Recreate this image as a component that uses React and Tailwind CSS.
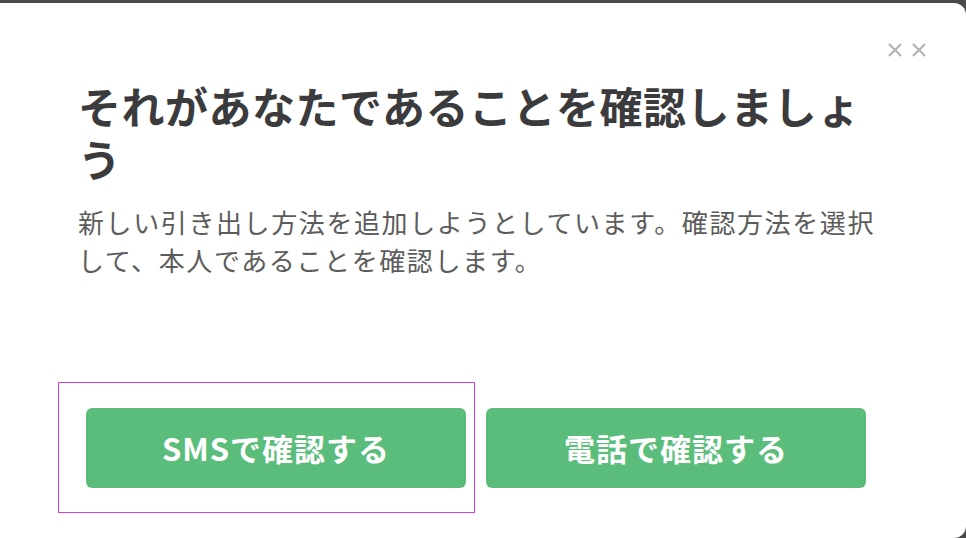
const FONT = { fontFamily: '"Noto Sans CJK JP", "Noto Sans", sans-serif' };

function XMark() {
  return (
    <svg width="16" height="16" viewBox="0 0 16 16" fill="none" stroke="currentColor" strokeWidth="2.2" strokeLinecap="butt">
      <path d="M2 2 L14 14 M14 2 L2 14" />
    </svg>
  );
}

export default function App() {
  return (
    <div className="w-[966px] h-[538px] bg-[#4a4a4a] pt-[3px] overflow-hidden" style={FONT}>
      <div className="h-[535px] bg-white rounded-r-[12px] flex flex-col px-[78px] pt-[38px] pb-[50px]">
        {/* Close */}
        <div className="flex justify-end -mr-[39px] h-[18px]">
          <div className="flex items-center gap-[8px] text-[#b3b3b3]">
            <XMark />
            <XMark />
          </div>
        </div>

        {/* Heading */}
        <h1 className="mt-[20px] text-[43px] leading-[53px] font-bold text-[#3b3b3d] tracking-[0.5px]">
          それがあなたであることを確認しましょう
        </h1>
        <p className="mt-[18px] text-[26px] leading-[38px] text-[#5c5c5c] tracking-[1.6px]">
          新しい引き出し方法を追加しようとしています。確認方法を選択して、本人であることを確認します。
        </p>

        {/* Actions */}
        <div className="mt-auto flex gap-[20px] pl-[8px]">
          <div className="relative">
            <span className="absolute -left-[28px] -top-[26px] -right-[9px] -bottom-[25px] border border-[#e03ad8] pointer-events-none" />
            <button className="w-[380px] h-[80px] rounded-[6px] bg-[#5bbd7b] text-white text-[31px] font-bold tracking-[1px]">
              SMSで確認する
            </button>
          </div>
          <button className="w-[380px] h-[80px] rounded-[6px] bg-[#5bbd7b] text-white text-[31px] font-bold tracking-[1px]">
            電話で確認する
          </button>
        </div>
      </div>
    </div>
  );
}
